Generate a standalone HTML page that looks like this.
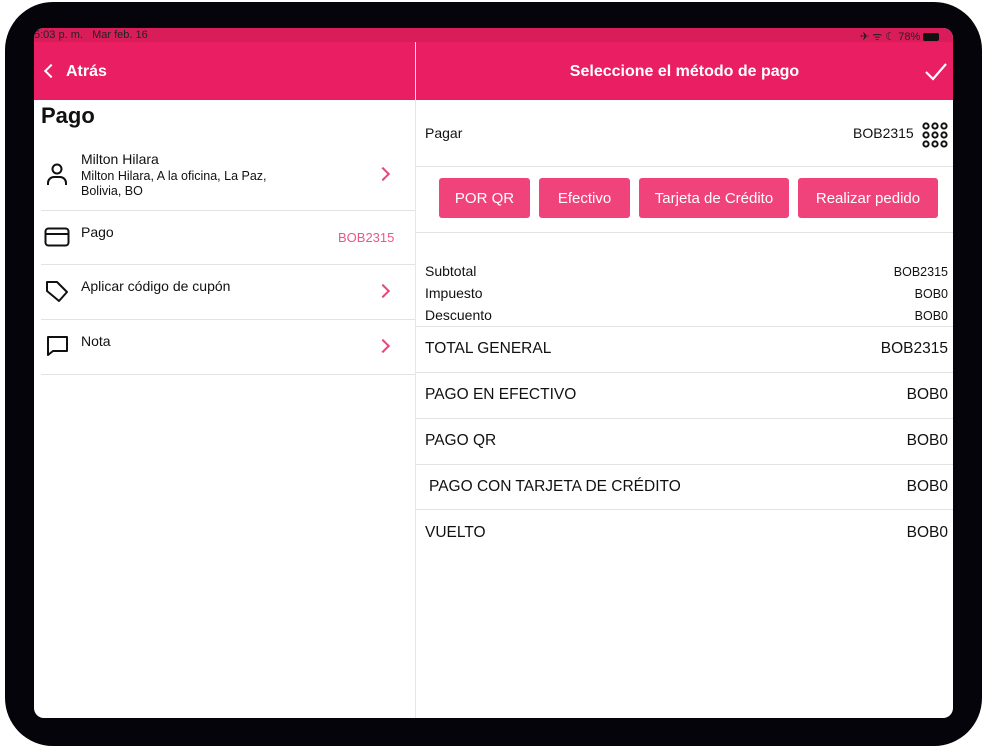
<!DOCTYPE html>
<html><head><meta charset="utf-8"><style>
*{margin:0;padding:0;box-sizing:border-box}
body{width:1000px;height:750px;background:#fff;position:relative;overflow:hidden;font-family:"Liberation Sans",sans-serif;color:#111}
.a{position:absolute;white-space:nowrap}
.frame{left:5px;top:2px;width:977px;height:744px;background:#05040a;border-radius:48px}
.screen{left:34px;top:28px;width:919px;height:690px;background:#fff;border-radius:10px;overflow:hidden}
.sep{position:absolute;height:1px;background:#e3e3e3}
.btn{position:absolute;top:178px;height:40px;background:#f0437c;color:#fff;font-size:15px;border-radius:3px;display:flex;align-items:center;justify-content:center}
.chev{position:absolute;width:10px;height:10px;border-right:2px solid #e8467c;border-top:2px solid #e8467c;transform:rotate(45deg)}
</style></head><body>
<div class="a frame"></div>
<div class="a screen">
  <div class="a" style="left:0;top:0;width:919px;height:14px;background:#d81d5a"></div>
  <div class="a" style="left:0;top:14px;width:919px;height:58px;background:#e91e63"></div>
  <div class="a" style="left:0;top:1px;font-size:11px;color:#222">5:03 p. m.&nbsp;&nbsp;&nbsp;Mar feb. 16</div>
  <div class="a" style="left:826px;top:1px;font-size:11px;color:#222">✈ ᯤ ☾ 78% <span style="display:inline-block;width:16px;height:8px;background:#111;border-radius:2px;vertical-align:middle"></span></div>
  <div class="a" style="left:381px;top:14px;width:1px;height:676px;background:#e6e6e6"></div>
  <div class="a" style="left:12px;top:38px;width:10px;height:10px;border-left:2.5px solid #fff;border-bottom:2.5px solid #fff;transform:rotate(45deg)"></div>
  <div class="a" style="left:32px;top:35px;color:#fff;font-size:16px;font-weight:bold">Atrás</div>
  <div class="a" style="left:7px;top:75px;font-size:22px;font-weight:bold">Pago</div>
  <svg class="a" style="left:12px;top:135px" width="22" height="24" viewBox="0 0 22 24" fill="none" stroke="#111" stroke-width="2"><circle cx="11" cy="6" r="4.5"/><path d="M2 22v-2a6 6 0 0 1 6-6h6a6 6 0 0 1 6 6v2"/></svg>
  <div class="a" style="left:47px;top:123px;font-size:14px">Milton Hilara</div>
  <div class="a" style="left:47px;top:141px;font-size:12.5px;line-height:15px">Milton Hilara, A la oficina, La Paz,<br>Bolivia, BO</div>
  <div class="chev" style="left:344px;top:141px"></div>
  <div class="sep" style="left:7px;top:182px;width:374px"></div>
  <svg class="a" style="left:10px;top:199px" width="26" height="20" viewBox="0 0 26 20" fill="none" stroke="#111" stroke-width="2"><rect x="1.5" y="1.5" width="23" height="17" rx="3"/><line x1="1.5" y1="7" x2="24.5" y2="7"/></svg>
  <div class="a" style="left:47px;top:196px;font-size:14px">Pago</div>
  <div class="a" style="left:304px;top:202px;font-size:13px;color:#e8588a">BOB2315</div>
  <div class="sep" style="left:7px;top:236px;width:374px"></div>
  <svg class="a" style="left:11px;top:251px" width="24" height="24" viewBox="0 0 24 24" fill="none" stroke="#111" stroke-width="2" stroke-linejoin="round"><path d="M2 3h10l10 10-8 9L2 12z"/></svg>
  <div class="a" style="left:47px;top:250px;font-size:14px">Aplicar código de cupón</div>
  <div class="chev" style="left:344px;top:258px"></div>
  <div class="sep" style="left:7px;top:291px;width:374px"></div>
  <svg class="a" style="left:12px;top:306px" width="24" height="24" viewBox="0 0 24 24" fill="none" stroke="#111" stroke-width="2" stroke-linejoin="round"><path d="M2 3h19v14H7l-5 4z"/></svg>
  <div class="a" style="left:47px;top:305px;font-size:14px">Nota</div>
  <div class="chev" style="left:344px;top:313px"></div>
  <div class="sep" style="left:7px;top:346px;width:374px"></div>
  <div class="a" style="left:382px;top:35px;width:537px;text-align:center;color:#fff;font-size:16px;font-weight:bold">Seleccione el método de pago</div>
  <svg class="a" style="left:890px;top:34px" width="24" height="20" viewBox="0 0 24 20" fill="none" stroke="#fff" stroke-width="2.2"><path d="M2 10l7 7L22 2"/></svg>
  <div class="a" style="left:391px;top:97px;font-size:14px">Pagar</div>
  <div class="a" style="left:819px;top:97px;font-size:14px">BOB2315</div>
  <svg class="a" style="left:888px;top:94px" width="26" height="26" viewBox="0 0 26 26" fill="none" stroke="#111" stroke-width="2"><circle cx="4" cy="4" r="2.6"/><circle cx="13" cy="4" r="2.6"/><circle cx="22" cy="4" r="2.6"/><circle cx="4" cy="13" r="2.6"/><circle cx="13" cy="13" r="2.6"/><circle cx="22" cy="13" r="2.6"/><circle cx="4" cy="22" r="2.6"/><circle cx="13" cy="22" r="2.6"/><circle cx="22" cy="22" r="2.6"/></svg>
  <div class="sep" style="left:382px;top:138px;width:537px"></div>
  <div class="btn" style="left:405px;top:150px;width:91px">POR QR</div>
  <div class="btn" style="left:505px;top:150px;width:91px">Efectivo</div>
  <div class="btn" style="left:605px;top:150px;width:150px">Tarjeta de Crédito</div>
  <div class="btn" style="left:764px;top:150px;width:140px">Realizar pedido</div>
  <div class="sep" style="left:382px;top:204px;width:537px"></div>
  <div class="a" style="left:391px;top:232px;font-size:14px;line-height:22px">Subtotal<br>Impuesto<br>Descuento</div>
  <div class="a" style="right:5px;top:233px;font-size:12.5px;line-height:22px;text-align:right">BOB2315<br>BOB0<br>BOB0</div>
  <div class="sep" style="left:382px;top:298px;width:537px"></div>
  <div class="a" style="left:391px;top:312px;font-size:15.5px">TOTAL GENERAL</div>
  <div class="a" style="right:5px;top:312px;font-size:15.5px">BOB2315</div>
  <div class="sep" style="left:382px;top:344px;width:537px"></div>
  <div class="a" style="left:391px;top:358px;font-size:15.5px">PAGO EN EFECTIVO</div>
  <div class="a" style="right:5px;top:358px;font-size:15.5px">BOB0</div>
  <div class="sep" style="left:382px;top:390px;width:537px"></div>
  <div class="a" style="left:391px;top:404px;font-size:15.5px">PAGO QR</div>
  <div class="a" style="right:5px;top:404px;font-size:15.5px">BOB0</div>
  <div class="sep" style="left:382px;top:436px;width:537px"></div>
  <div class="a" style="left:395px;top:450px;font-size:15.5px">PAGO CON TARJETA DE CRÉDITO</div>
  <div class="a" style="right:5px;top:450px;font-size:15.5px">BOB0</div>
  <div class="sep" style="left:382px;top:481px;width:537px"></div>
  <div class="a" style="left:391px;top:496px;font-size:15.5px">VUELTO</div>
  <div class="a" style="right:5px;top:496px;font-size:15.5px">BOB0</div>
</div>
</body></html>
